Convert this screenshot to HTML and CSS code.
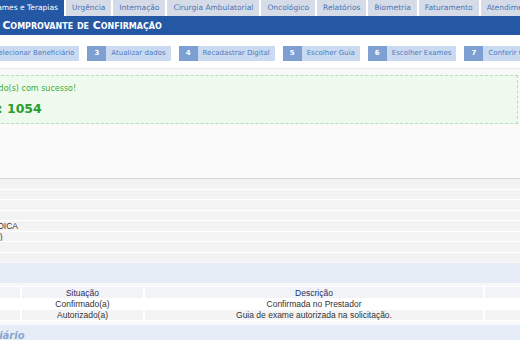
FILE: index.html
```html
<!DOCTYPE html>
<html lang="pt-BR">

<head>
    <meta charset="UTF-8">
    <meta name="viewport" content="width=device-width, initial-scale=1.0">
    <title>Comprovante de Confirmação</title>
    <link rel="stylesheet" href="styles.css">
</head>

<body>
    <div class="tabs">
        <div class="tab active">Exames e Terapias</div>
        <div class="tab">Urgência</div>
        <div class="tab">Internação</div>
        <div class="tab">Cirurgia Ambulatorial</div>
        <div class="tab">Oncológico</div>
        <div class="tab">Relatórios</div>
        <div class="tab">Biometria</div>
        <div class="tab">Faturamento</div>
        <div class="tab">Atendimento</div>
    </div>

    <div class="titlebar">Conferir Comprovante de Confirmação</div>

    <div class="steps">
        <div class="step first"><span class="label">Selecionar Beneficiário</span></div>
        <div class="step"><span class="num">3</span><span class="label">Atualizar dados</span></div>
        <div class="step"><span class="num">4</span><span class="label">Recadastrar Digital</span></div>
        <div class="step"><span class="num">5</span><span class="label">Escolher Guia</span></div>
        <div class="step"><span class="num">6</span><span class="label">Escolher Exames</span></div>
        <div class="step"><span class="num">7</span><span class="label">Conferir Comprovante</span></div>
    </div>

    <div class="content">
        <div class="msg">
            <p class="msg-line">Exame(s) confirmado(s) com sucesso!</p>
            <p class="msg-code">Número da Guia: 1054</p>
        </div>

        <div class="panel"></div>

        <div class="rows">
            <div class="row"></div>
            <div class="row"></div>
            <div class="row"></div>
            <div class="row"></div>
            <div class="row"><span class="cell">CONSULTA MÉDICA</span></div>
            <div class="row"><span class="cell">Eletiva (normal)</span></div>
            <div class="row"></div>
            <div class="row"></div>
        </div>

        <div class="section"></div>

        <table class="grid">
            <thead>
                <tr>
                    <th class="c-date"></th>
                    <th class="c-sit">Situação</th>
                    <th class="c-desc">Descrição</th>
                    <th class="c-user"></th>
                </tr>
            </thead>
            <tbody>
                <tr>
                    <td></td>
                    <td>Confirmado(a)</td>
                    <td>Confirmada no Prestador</td>
                    <td></td>
                </tr>
                <tr class="alt">
                    <td></td>
                    <td>Autorizado(a)</td>
                    <td>Guia de exame autorizada na solicitação.</td>
                    <td></td>
                </tr>
            </tbody>
        </table>

        <div class="section"><span class="section-title">Dados do Beneficiário</span></div>
    </div>
</body>

</html>
```

FILE: styles.css
```css
body {
    margin: 0;
    width: 520px;
    height: 340px;
    overflow: hidden;
    background: white;
    font-family: "DejaVu Sans", Verdana, sans-serif;
}

.tabs {
    display: flex;
    gap: 2px;
    height: 16px;
    margin-left: -18px;
    white-space: nowrap;
}

.tab {
    padding: 0 6px;
    line-height: 16px;
    font-size: 7.5px;
    color: #4a74b4;
    background: #d6dce7;
    flex-shrink: 0;
}

.tab.active {
    background: #2457a4;
    color: white;
}

.titlebar {
    height: 19px;
    line-height: 19px;
    margin-left: -49px;
    background: #2457a4;
    color: white;
    font-size: 10.8px;
    font-weight: bold;
    font-variant: small-caps;
    white-space: nowrap;
}

.steps {
    display: flex;
    gap: 8px;
    margin: 11px 0 0 -11px;
    height: 15px;
    white-space: nowrap;
}

.step {
    display: flex;
    flex-shrink: 0;
    font-size: 7px;
    line-height: 15px;
}

.num {
    width: 19px;
    text-align: center;
    background: #7d9fd2;
    color: white;
    font-weight: bold;
}

.label {
    padding: 0 5px;
    background: #c9daf1;
    color: #4c7bbf;
}

.content {
    margin-top: 7px;
    padding-top: 6px;
    background: #f8f8f8;
    border-top: 1px solid #ececec;
}

.msg {
    margin: 0 2px 0 -4px;
    padding: 6px 0 5px;
    background: #eefaee;
    border: 1px dashed #b6deb6;
    overflow: hidden;
    white-space: nowrap;
}

.msg p {
    margin: 0;
}

.msg-line {
    margin-left: -74px !important;
    font-size: 8px;
    line-height: 14px;
    color: #3aac3a;
}

.msg-code {
    margin: 4px 0 0 -113px !important;
    font-size: 12.5px;
    font-weight: bold;
    line-height: 18px;
    color: #2a9c2a;
}

.panel {
    height: 54px;
    background: #fafafa;
    border-bottom: 1px solid #d6d6de;
}

.rows {
    display: flex;
    flex-direction: column;
    gap: 1px;
    background: white;
}

.row {
    height: 9.5px;
    background: #f3f3f3;
    font-family: "Liberation Sans", Arial, sans-serif;
    font-size: 8.5px;
    line-height: 10px;
    color: #333;
    white-space: nowrap;
    overflow: hidden;
}

.row .cell {
    display: block;
}

.row:nth-child(5) .cell {
    margin-left: -62px;
}

.row:nth-child(6) .cell {
    margin-left: -57px;
}

.section {
    height: 20px;
    margin-top: 1px;
    background: #e6edf7;
    overflow: hidden;
    white-space: nowrap;
}

.section-title {
    display: block;
    margin-left: -99px;
    line-height: 22px;
    font-size: 10px;
    font-weight: bold;
    font-style: italic;
    color: #89a5cf;
}

.grid {
    margin: 3px 0 4px -2px;
    width: 524px;
    border-collapse: separate;
    border-spacing: 2px 1px;
    table-layout: fixed;
    font-family: "Liberation Sans", Arial, sans-serif;
    font-size: 8.5px;
    color: #333;
    background: white;
}

.grid th {
    height: 11px;
    padding: 0;
    font-weight: normal;
    color: #1f2f66;
    background: #f1f3f7;
}

.grid td {
    height: 10px;
    padding: 0;
    text-align: center;
    line-height: 10px;
}

.grid tr.alt td {
    background: #f4f4f4;
}

.c-date {
    width: 20px;
}

.c-sit {
    width: 121px;
}

.c-desc {
    width: 338px;
}
```
